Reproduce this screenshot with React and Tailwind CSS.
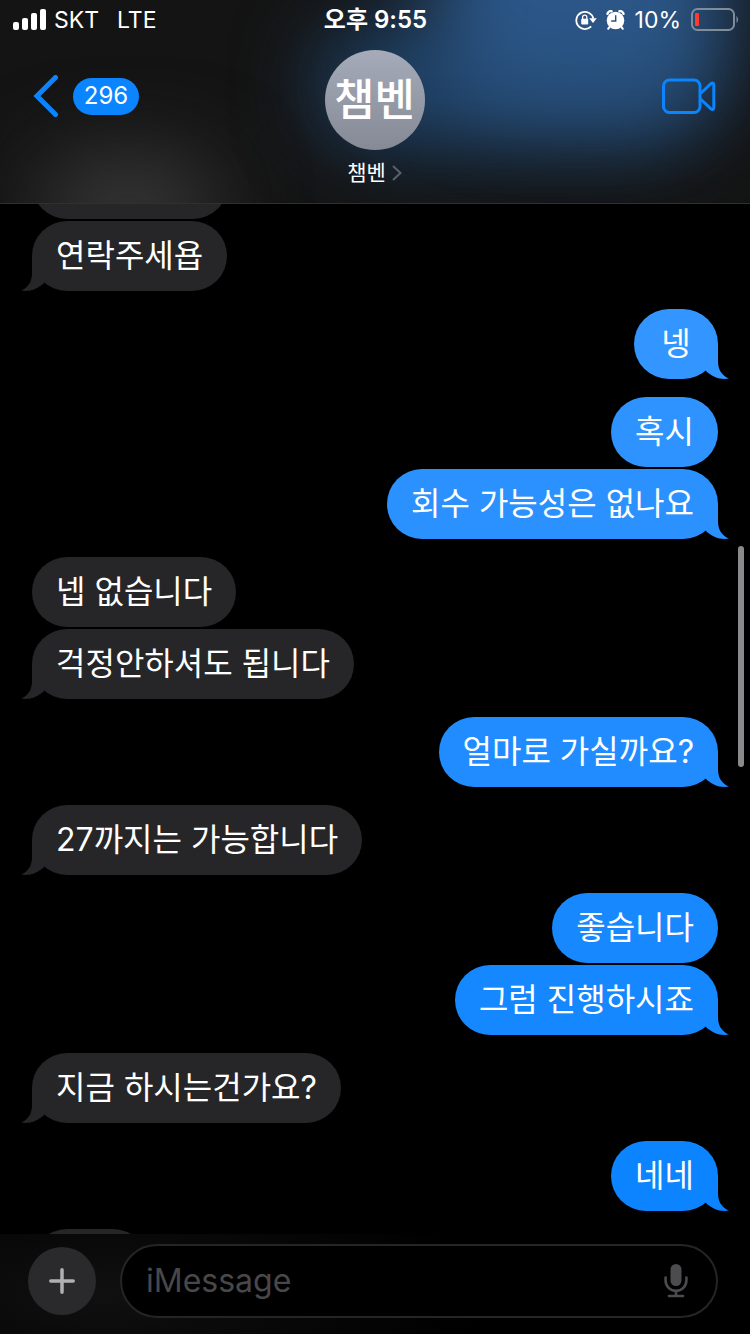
import { clsx } from "clsx";

// gap: space above the bubble, tail: last bubble of its group
const messages = [
  { id: 1, from: "them", width: "w-[196px]", gap: "mt-0" },
  { id: 2, from: "them", text: "연락주세욥", tail: true, gap: "mt-[2px]" },
  { id: 3, from: "me", text: "넹", tail: true, gap: "mt-[18px]", color: "bg-[#3395ff] text-[#3395ff]" },
  { id: 4, from: "me", text: "혹시", gap: "mt-[18px]", color: "bg-[#2e93ff] text-[#2e93ff]" },
  { id: 5, from: "me", text: "회수 가능성은 없나요", tail: true, gap: "mt-[2px]", color: "bg-[#2b91ff] text-[#2b91ff]" },
  { id: 6, from: "them", text: "넵 없습니다", gap: "mt-[18px]" },
  { id: 7, from: "them", text: "걱정안하셔도 됩니다", tail: true, gap: "mt-[2px]" },
  { id: 8, from: "me", text: "얼마로 가실까요?", tail: true, gap: "mt-[18px]", color: "bg-[#208cff] text-[#208cff]" },
  { id: 9, from: "them", text: "27까지는 가능합니다", tail: true, gap: "mt-[18px]" },
  { id: 10, from: "me", text: "좋습니다", gap: "mt-[18px]", color: "bg-[#1888ff] text-[#1888ff]" },
  { id: 11, from: "me", text: "그럼 진행하시죠", tail: true, gap: "mt-[2px]", color: "bg-[#1587ff] text-[#1587ff]" },
  { id: 12, from: "them", text: "지금 하시는건가요?", tail: true, gap: "mt-[18px]" },
  { id: 13, from: "me", text: "네네", tail: true, gap: "mt-[18px]", color: "bg-[#0c84ff] text-[#0c84ff]" },
  { id: 14, from: "them", width: "w-[116px]", gap: "mt-[18px]" },
];

const Signal = () => (
  <svg width="33" height="22" viewBox="0 0 33 22" fill="white" aria-hidden="true">
    <rect x="0" y="13" width="6" height="8" rx="2" />
    <rect x="9" y="9" width="6" height="12" rx="2" />
    <rect x="18" y="4" width="6" height="17" rx="2" />
    <rect x="27" y="0" width="6" height="21" rx="2" />
  </svg>
);

const RotationLock = () => (
  <svg width="22" height="22" viewBox="0 0 22 22" fill="none" aria-hidden="true">
    <path d="M16.2 17.4A8.6 8.6 0 1 1 18.3 9.5" stroke="white" strokeWidth="1.8" />
    <path d="M14.2 9.2H21.8L18 14Z" fill="white" />
    <rect x="6.2" y="9.8" width="7" height="5.6" rx="1" fill="white" />
    <path d="M7.6 10V8.2a2.1 2.1 0 0 1 4.2 0V10" stroke="white" strokeWidth="1.3" />
  </svg>
);

const Alarm = () => (
  <svg width="20" height="20" viewBox="0 0 20 20" fill="none" aria-hidden="true">
    <circle cx="9.5" cy="10.5" r="8.8" fill="white" />
    <path d="M1.5 3.8A3.4 3.4 0 0 1 5.5 1.2M13.5 1.2A3.4 3.4 0 0 1 17.5 3.8" stroke="white" strokeWidth="2.4" strokeLinecap="round" />
    <path d="M3.8 16.6 2.2 18.8M15.2 16.6 16.8 18.8" stroke="white" strokeWidth="2" strokeLinecap="round" />
    <path d="M9.7 5.2V11H5.2" stroke="#28507c" strokeWidth="1.4" />
  </svg>
);

const Battery = () => (
  <svg width="48" height="24" viewBox="0 0 48 24" fill="none" aria-hidden="true">
    <rect x="2" y="1" width="42" height="21" rx="5.5" stroke="#7f8c9b" strokeWidth="2" />
    <rect x="5" y="5" width="4" height="13" rx="1" fill="#ff3b30" />
    <path d="M46.5 8v7c1-.8 1.5-2 1.5-3.5S47.5 8.8 46.5 8Z" fill="#7f8c9b" />
  </svg>
);

const VideoIcon = () => (
  <svg width="54" height="36" viewBox="0 0 54 36" fill="none" stroke="#0a84ff" strokeWidth="3" strokeLinejoin="round" aria-hidden="true">
    <rect x="1.5" y="2" width="36.5" height="32.5" rx="6" />
    <path d="M38.5 15.5 49 5.7C50.5 4.5 51.8 5 51.8 6.7V29.8C51.8 31.5 50.5 32 49 30.8L38.5 21" />
  </svg>
);

const MicIcon = () => (
  <svg width="24" height="34" viewBox="0 0 24 34" fill="none" stroke="#4c4c4e" strokeWidth="2.6" strokeLinecap="round" aria-hidden="true">
    <rect x="6.5" y="0" width="11" height="22" rx="5.5" fill="#4c4c4e" stroke="none" />
    <path d="M1.6 13.5V16.5a10.4 10.4 0 0 0 20.8 0V13.5M12 27V32M5 32H19" />
  </svg>
);

const Tail = ({ mine }) => (
  <svg
    width="33"
    height="36"
    viewBox="0 0 33 36"
    fill="currentColor"
    aria-hidden="true"
    className={clsx("absolute bottom-0", mine ? "-right-[11px]" : "-left-[11px] -scale-x-100")}
  >
    <path d="M22 0V18C22 26 25 32 33 35.6C24 37 16 34 9.5 27.5L4 8Z" />
  </svg>
);

const Bubble = ({ from, text, width, tail, gap, color }) => {
  const mine = from === "me";
  return (
    <li
      className={clsx(
        "relative flex h-[70px] min-w-[84px] max-w-[75%] shrink-0 items-center justify-center rounded-full px-6",
        mine ? "self-end" : "self-start bg-[#262628] text-[#262628]",
        color,
        width,
        gap
      )}
    >
      {tail && <Tail mine={mine} />}
      {text && <span className="relative whitespace-nowrap text-[32px] leading-10 text-white">{text}</span>}
    </li>
  );
};

const StatusBar = () => (
  <div className="grid h-10 grid-cols-[1fr_auto_1fr] items-center pr-3 pl-[13px] text-[23px] leading-10 text-white">
    <div className="flex items-center gap-2">
      <Signal />
      <span>SKT</span>
      <span className="ml-[10px]">LTE</span>
    </div>
    <time className="text-[24px] font-semibold">오후 9:55</time>
    <div className="flex items-center justify-end gap-[9px]">
      <RotationLock />
      <Alarm />
      <span>10%</span>
      <Battery />
    </div>
  </div>
);

// colours of the bubbles that scrolled under the bar
const HeaderBackdrop = () => (
  <div className="absolute inset-0 overflow-hidden">
    <div className="absolute top-[160px] left-[5%] h-[90px] w-[24%] rounded-full bg-[#3c3c3c] blur-[44px]" />
    <div className="absolute top-[20px] left-[42%] h-[130px] w-[53%] rounded-full bg-[#1f4063] blur-[40px]" />
    <div className="absolute -top-[120px] left-[58%] h-[225px] w-[39%] rounded-[80px] bg-[#2b5687] blur-[42px]" />
  </div>
);

const Header = () => (
  <header className="relative isolate h-[204px] shrink-0 border-b border-[#303032] bg-[#141414]">
    <HeaderBackdrop />
    <div className="relative">
      <StatusBar />
      <nav className="grid grid-cols-[1fr_auto_1fr] items-start pt-[10px] pr-[34px] pl-[33px]">
        <a href="#chats" aria-label="뒤로" className="flex h-[92px] items-center gap-[14px] justify-self-start">
          <svg width="26" height="42" viewBox="0 0 26 42" fill="none" stroke="#0a84ff" strokeWidth="5" strokeLinecap="round" aria-hidden="true">
            <path d="M22.5 2.5 4 21 22.5 39.5" />
          </svg>
          <span className="flex h-[37px] w-[66px] items-center justify-center rounded-full bg-[#0a84ff] text-[24px] leading-8 text-white">
            296
          </span>
        </a>
        <button type="button" className="flex flex-col items-center">
          <span className="flex size-[100px] items-center justify-center rounded-full bg-linear-to-b from-[#a5abb9] to-[#858a95] text-[44px] leading-none font-medium text-white">
            챔벤
          </span>
          <span className="mt-[7px] flex items-center gap-[6px] text-[21px] leading-8 text-white">
            챔벤
            <svg width="10" height="16" viewBox="0 0 10 16" fill="none" stroke="#59616b" strokeWidth="2" aria-hidden="true">
              <path d="M1 1 8.5 8 1 15" />
            </svg>
          </span>
        </button>
        <button type="button" aria-label="영상 통화" className="flex h-[92px] items-center justify-self-end">
          <VideoIcon />
        </button>
      </nav>
    </div>
  </header>
);

const Composer = () => (
  <footer className="relative flex shrink-0 items-center gap-6 bg-black bg-[radial-gradient(ellipse_380px_130px_at_14%_60%,#101010_0%,#00000000_100%)] pt-[10px] pr-8 pb-4 pl-7">
    <button type="button" aria-label="추가" className="flex size-[68px] shrink-0 items-center justify-center rounded-full bg-[#2a2a2c]">
      <svg width="26" height="26" viewBox="0 0 26 26" stroke="#b0b0b2" strokeWidth="3.5" strokeLinecap="round" aria-hidden="true">
        <path d="M13 1.8V24.2M1.8 13H24.2" />
      </svg>
    </button>
    <div className="flex h-[74px] min-w-0 flex-1 items-center rounded-full border-2 border-[#252526] bg-black pr-7 pl-6">
      <input
        type="text"
        aria-label="iMessage"
        placeholder="iMessage"
        className="min-w-0 flex-1 bg-transparent text-[32px] leading-10 text-white outline-none placeholder:text-[#48484a]"
      />
      <button type="button" aria-label="음성 입력" className="shrink-0">
        <MicIcon />
      </button>
    </div>
  </footer>
);

const App = () => (
  <div className="flex h-screen flex-col overflow-hidden bg-black font-[Inter,'Noto_Sans_CJK_KR',sans-serif]">
    <Header />
    <main className="relative min-h-0 flex-1 overflow-hidden">
      <ul className="-mt-[55px] flex flex-col px-8">
        {messages.map((message) => (
          <Bubble key={message.id} {...message} />
        ))}
      </ul>
      <div className="absolute top-[342px] right-[6px] h-[221px] w-[6px] rounded-full bg-[#8a8a8c]" />
    </main>
    <Composer />
  </div>
);

export default App;
